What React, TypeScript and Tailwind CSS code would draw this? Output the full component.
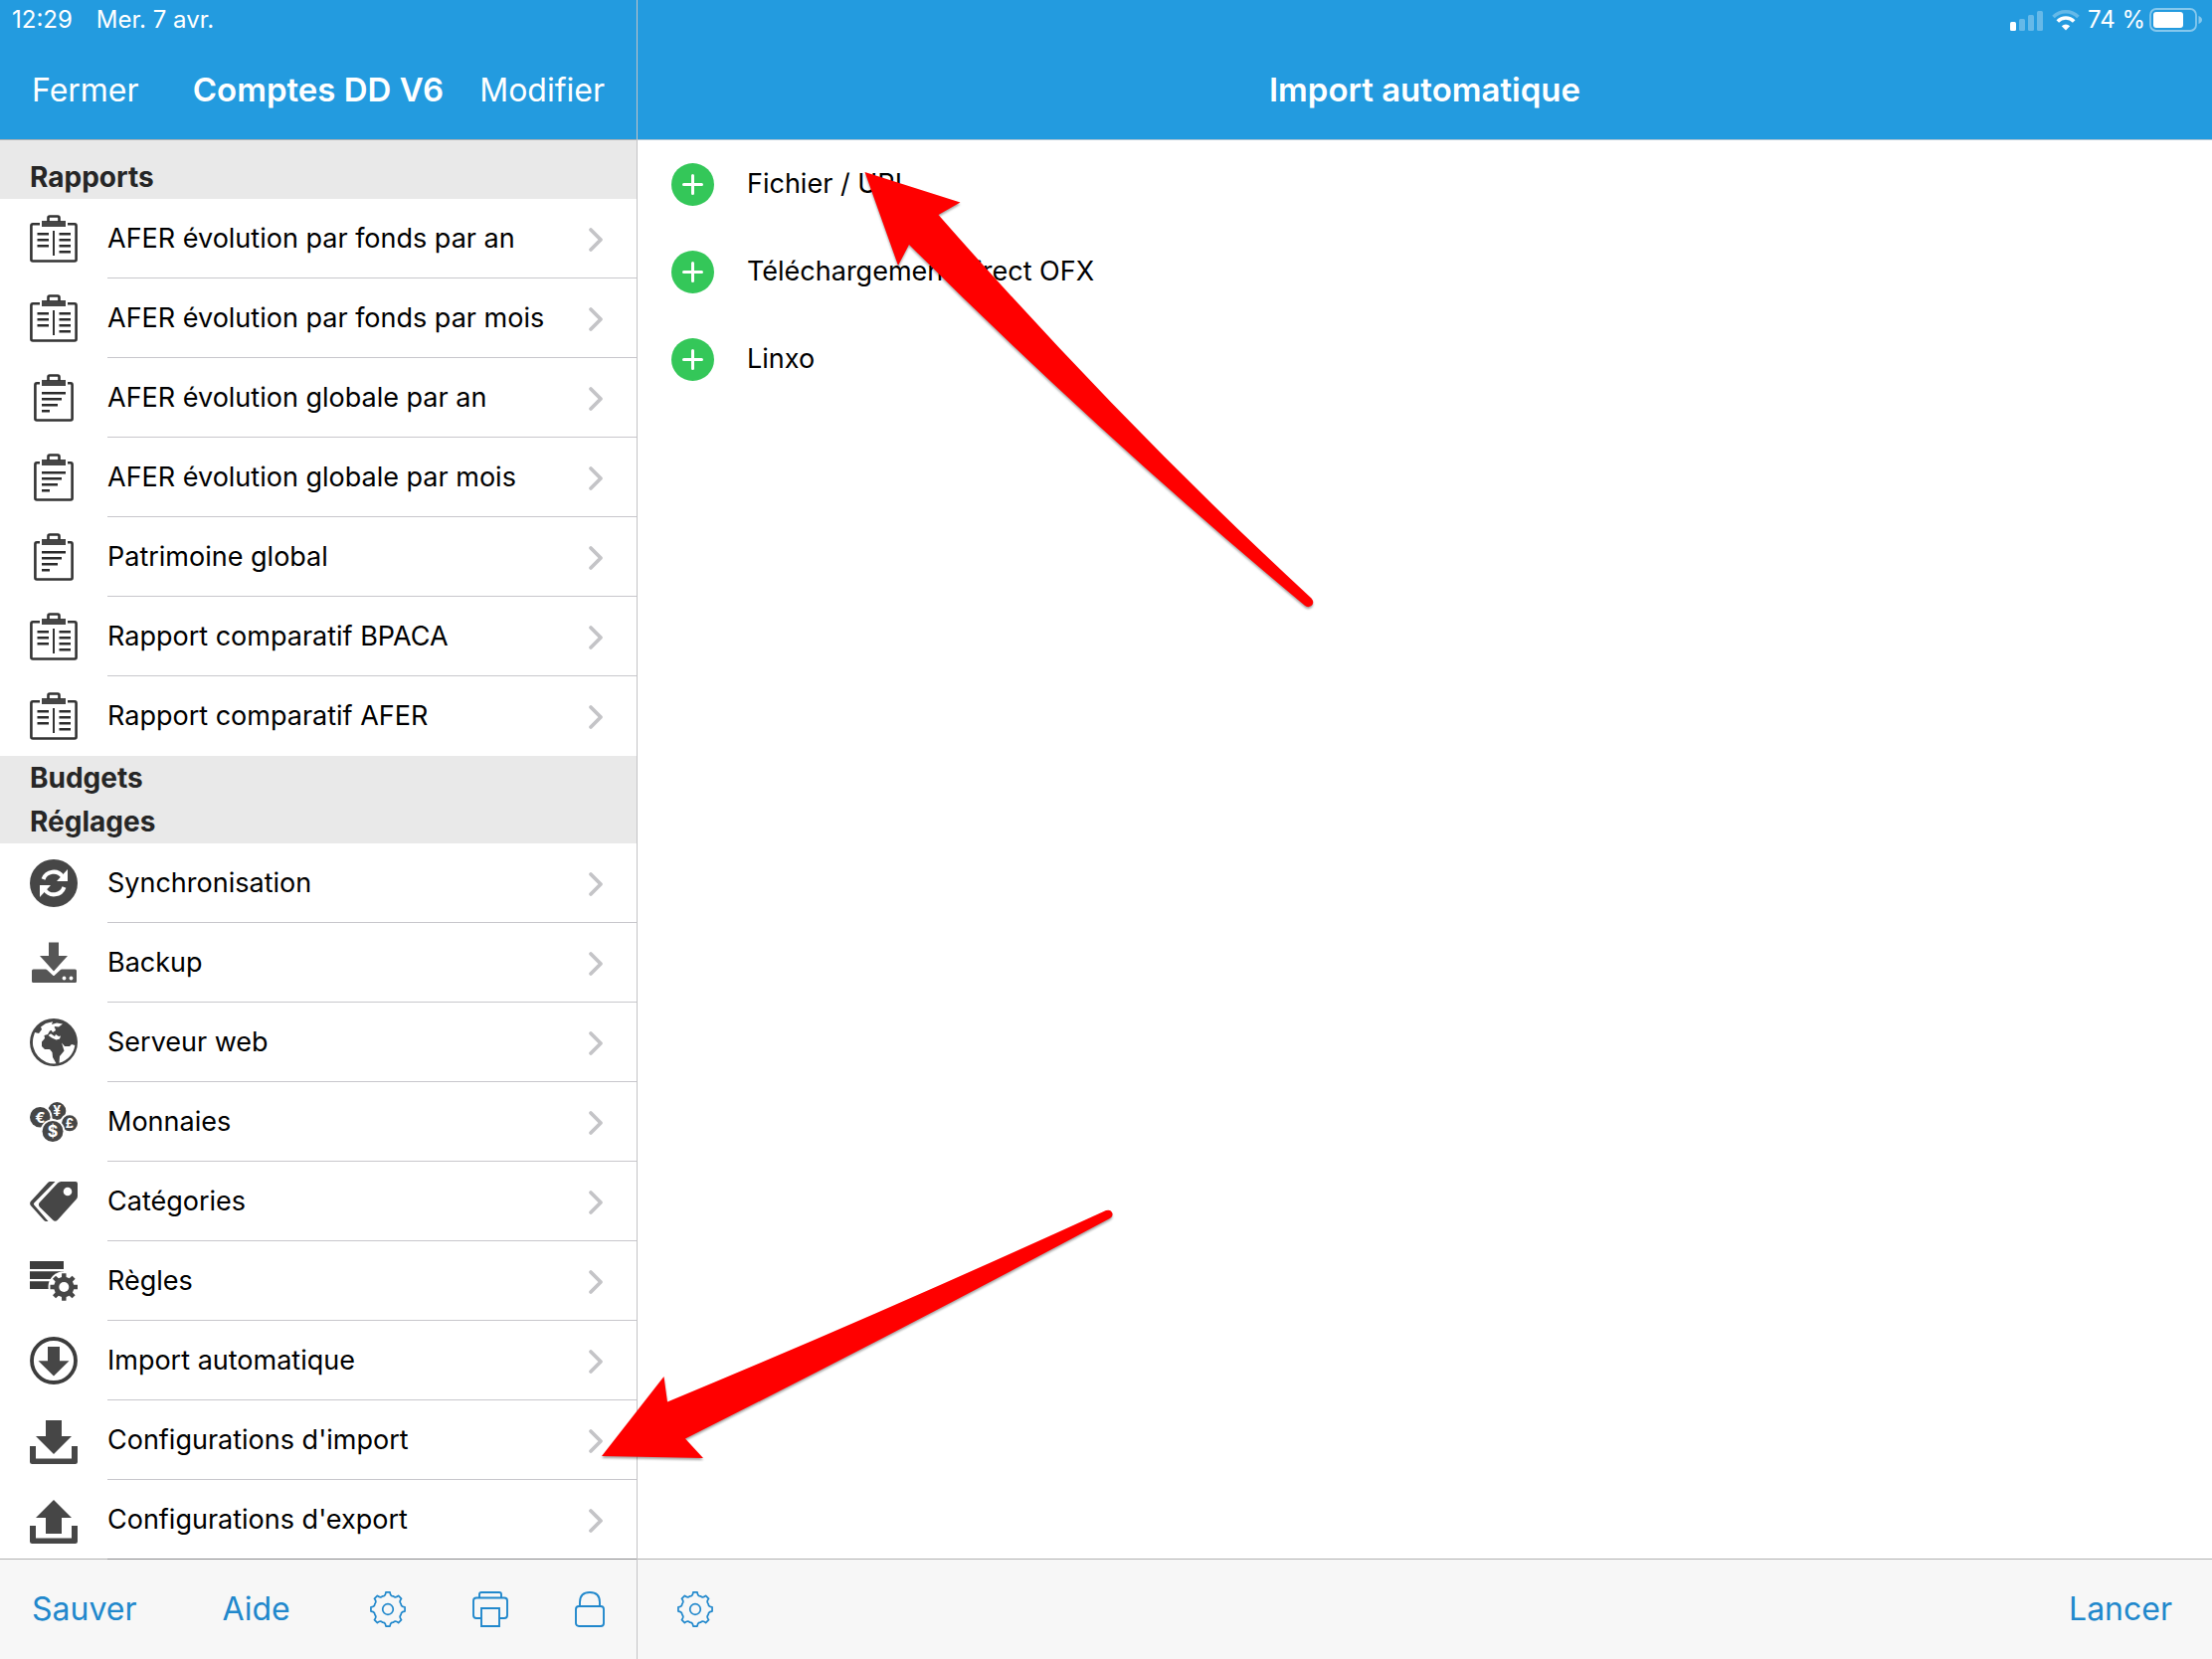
import React from 'react';

type IconProps = { className?: string };

const DARK = '#464646';

const point = (cx: number, cy: number, r: number, deg: number) => {
  const a = ((deg - 90) * Math.PI) / 180;
  return `${(cx + r * Math.cos(a)).toFixed(2)} ${(cy + r * Math.sin(a)).toFixed(2)}`;
};

// Solid gear with straight teeth
const cogPath = (cx: number, cy: number, outer: number, inner: number) => {
  let d = '';
  for (let i = 0; i < 8; i++) {
    const a = i * 45;
    d += `${i === 0 ? 'M' : 'L'}${point(cx, cy, inner, a - 13)} L${point(cx, cy, outer, a - 9)} L${point(cx, cy, outer, a + 9)} L${point(cx, cy, inner, a + 13)} `;
  }
  return d + 'Z';
};

// Outline gear with flared teeth
const wavyGearPath = (cx: number, cy: number, outer: number, inner: number) => {
  let d = `M${point(cx, cy, inner, -22.5)} `;
  for (let i = 0; i < 8; i++) {
    const a = i * 45;
    d += `Q${point(cx, cy, inner - 0.8, a - 10)} ${point(cx, cy, outer, a - 7)} L${point(cx, cy, outer, a + 7)} Q${point(cx, cy, inner - 0.8, a + 10)} ${point(cx, cy, inner, a + 22.5)} `;
  }
  return d + 'Z';
};

const ListIcon: React.FC<{ children: React.ReactNode }> = ({ children }) => (
  <svg viewBox="0 0 48 48" className="w-12 h-12 shrink-0" fill={DARK} aria-hidden="true">
    {children}
  </svg>
);

const Clip = () => (
  <>
    <rect x="12" y="6" width="24" height="6" />
    <path d="M18.5 7V3Q18.5 1.5 20 1.5H28Q29.5 1.5 29.5 3V7" fill="none" stroke="#333" strokeWidth="2.6" />
    <rect x="20" y="3" width="8" height="3" fill="#fff" />
  </>
);

const CompareReportIcon = () => (
  <ListIcon>
    <path d="M10 9.3H3Q1.4 9.3 1.4 11V45Q1.4 46.5 3 46.5H45Q46.6 46.5 46.6 45V11Q46.6 9.3 45 9.3H38" fill="none" stroke="#333" strokeWidth="2.6" />
    <Clip />
    <path d="M7.5 19.3H19M7.5 25.3H19M7.5 31.3H19M29.5 19.3H41M29.5 25.3H41M29.5 31.3H41M29.5 37.3H41" stroke="#2b2b2b" strokeWidth="2.6" />
    <path d="M24 16V41" stroke="#333" strokeWidth="2" />
  </ListIcon>
);

const ReportIcon = () => (
  <ListIcon>
    <path d="M10 9.3H7Q5.4 9.3 5.4 11V45Q5.4 46.5 7 46.5H41Q42.6 46.5 42.6 45V11Q42.6 9.3 41 9.3H38" fill="none" stroke="#333" strokeWidth="2.6" />
    <Clip />
    <path d="M12 19.3H36M12 25.3H32M12 31.3H28M12 37.3H20" stroke="#2b2b2b" strokeWidth="2.6" />
  </ListIcon>
);

const SyncIcon = () => (
  <ListIcon>
    <circle cx="24" cy="24" r="24" />
    <path d="M13.5 20A11 11 0 0 1 33 17.5" fill="none" stroke="#fff" strokeWidth="4" />
    <path d="M38 10V22H27Z" fill="#fff" />
    <path d="M34.5 28A11 11 0 0 1 15 30.5" fill="none" stroke="#fff" strokeWidth="4" />
    <path d="M10 38V26H21Z" fill="#fff" />
  </ListIcon>
);

const BackupIcon = () => (
  <ListIcon>
    <path d="M3.5 30.5H45.5Q47 30.5 47 32V42.500Q47 44 45.500 44H3.500Q2 44 2 42.500V32Q2 30.500 3.500 30.500Z" fill="#565656" />
    <path d="M17 29.500L24 36L31 29.500Z" fill="#fff" stroke="#fff" strokeWidth="2" strokeLinejoin="round" />
    <path d="M19 3.500H29V17H38L24 32.500L10 17H19Z" fill="#565656" />
    <circle cx="34.500" cy="39.500" r="1.900" fill="#fff" />
    <circle cx="41.500" cy="39.500" r="1.900" fill="#fff" />
  </ListIcon>
);

const GlobeIcon = () => (
  <ListIcon>
    <circle cx="24" cy="24" r="24" />
    <g fill="#fff">
      <path d="M3.500 19L5 14L9 15L12 11L11 8.500L16 5L23 3.300L22 6L27 4.500L33 5.500L29 8.500L25 8L24 11L20 12.500L18 16L14.500 17L15 20L12 23.500L12 28L15 31L20 31L22.500 34L23 39L26.500 45.300A21.500 21.500 0 0 1 3.500 19Z" />
      <path d="M18.500 17L21 15.300L25 18L26 16L29 18L31 17.500L30 20.500L26.500 21.500L22 19.500Z" />
      <path d="M21 11L25 9L26 12L23 14Z" />
      <path d="M32 24.500L35 28L40 28L42 26L45.300 27A21.500 21.500 0 0 1 29.500 44.800L30 38L34.500 32.500Z" />
    </g>
  </ListIcon>
);

const coins = [
  { sign: '¥', cx: 27.3, cy: 13, r: 9, size: 14 },
  { sign: '£', cx: 40, cy: 25.3, r: 8, size: 13 },
  { sign: '€', cx: 10.3, cy: 19.3, r: 10.3, size: 15 },
  { sign: '$', cx: 23, cy: 33.5, r: 10.5, size: 16 },
];

const CurrencyIcon = () => (
  <ListIcon>
    {coins.map((c) => (
      <g key={c.sign}>
        <circle cx={c.cx} cy={c.cy} r={c.r + 1.8} fill="#fff" />
        <circle cx={c.cx} cy={c.cy} r={c.r} />
        <text x={c.cx} y={c.cy + c.size * 0.36} fontSize={c.size} fontWeight="700" textAnchor="middle" fill="#fff">
          {c.sign}
        </text>
      </g>
    ))}
  </ListIcon>
);

const TagsIcon = () => (
  <ListIcon>
    <path d="M20.5 4H25.5L4.3 25.5Q3.5 26.5 4.3 27.5L18.5 44H16.5Q15 44 14 42.8L0.8 28Q-0.6 26 0.8 24L18 5.2Q19 4 20.5 4Z" />
    <path d="M31.5 4H46Q48 4 48 6V18.5Q48 20.5 46.5 22L28 42.5Q25.500 45 23 42.500L9.800 29.500Q8 27 9.800 25L28 5.500Q29.500 4 31.500 4Z" />
    <circle cx="38" cy="14" r="4.300" fill="#fff" />
  </ListIcon>
);

const RulesIcon = () => (
  <ListIcon>
    <path d="M0 4H34V12H0ZM0 14.3H34V22H0ZM0 24.3H34V32H0Z" fill="#3c3c3c" />
    <circle cx="34.3" cy="30" r="15.8" fill="#fff" />
    <path d={cogPath(34.3, 30, 14, 10.2)} />
    <circle cx="34.3" cy="30" r="5" fill="#fff" />
  </ListIcon>
);

const AutoImportIcon = () => (
  <ListIcon>
    <circle cx="24" cy="24" r="22" fill="none" stroke="#3c3c3c" strokeWidth="3.8" />
    <path d="M18 10H30V24.3H39.5L24 39.5L8.5 24.3H18Z" />
  </ListIcon>
);

const Tray = () => (
  <path d="M0 30H6V42.500H42V30H48V45.500Q48 48 45.500 48H2.500Q0 48 0 45.500Z" />
);

const ImportConfigIcon = () => (
  <ListIcon>
    <path d="M16 4H32V20H42L24 38L6 20H16Z" />
    <Tray />
  </ListIcon>
);

const ExportConfigIcon = () => (
  <ListIcon>
    <path d="M24 4L42 22H32V38H16V22H6Z" />
    <Tray />
  </ListIcon>
);

const Chevron = () => (
  <svg viewBox="0 0 16 26" className="w-4 h-[26px] shrink-0" fill="none" stroke="#c4c4c7" strokeWidth="3.8" strokeLinecap="round" strokeLinejoin="round" aria-hidden="true">
    <path d="M3 3L13 13L3 23" />
  </svg>
);

const GearIcon: React.FC<IconProps> = ({ className }) => (
  <svg viewBox="0 0 36 36" className={className} fill="none" stroke="currentColor" strokeWidth="1.7" strokeLinejoin="round" aria-hidden="true">
    <path d={wavyGearPath(18, 18, 17.2, 14.2)} />
    <circle cx="18" cy="18" r="5.3" />
  </svg>
);

const PrinterIcon: React.FC<IconProps> = ({ className }) => (
  <svg viewBox="0 0 36 36" className={className} fill="none" stroke="currentColor" strokeWidth="1.9" aria-hidden="true">
    <path d="M7 6.5V3Q7 1 9 1H27Q29 1 29 3V6.5" />
    <path d="M8.5 27H4Q1 27 1 24V9.5Q1 6.5 4 6.5H32Q35 6.5 35 9.5V24Q35 27 32 27H27.5" />
    <path d="M9 17H27V35H9Z" />
  </svg>
);

const LockIcon: React.FC<IconProps> = ({ className }) => (
  <svg viewBox="0 0 30 36" className={className} fill="none" stroke="currentColor" strokeWidth="1.9" aria-hidden="true">
    <path d="M5 15V11Q5 1 15 1Q25 1 25 11V15" />
    <rect x="1" y="15" width="28" height="20" rx="3" />
  </svg>
);

const StatusIcons = () => (
  <div className="flex items-center text-white">
    <svg viewBox="0 0 70 24" className="w-[70px] h-6" fill="#fff" aria-hidden="true">
      <rect x="0" y="14" width="6" height="9" rx="1.5" />
      <g opacity="0.3">
        <rect x="9" y="11" width="6" height="12" rx="1.5" />
        <rect x="18" y="7" width="6" height="16" rx="1.5" />
        <rect x="27" y="3" width="6" height="20" rx="1.5" />
      </g>
      <g fill="none" stroke="#fff" strokeWidth="3.6">
        <path d="M43.5 9A17.5 17.5 0 0 1 68.5 9" opacity="0.3" />
        <path d="M47.8 13.5A11.5 11.5 0 0 1 64.2 13.5" />
      </g>
      <path d="M56 22.5L51.8 18.3A6 6 0 0 1 60.2 18.3Z" />
    </svg>
    <span className="ml-2 text-2xl">74 %</span>
    <svg viewBox="0 0 54 24" className="ml-1 w-[54px] h-6" aria-hidden="true">
      <rect x="1" y="1" width="46" height="22" rx="6" fill="none" stroke="#fff" strokeWidth="1.8" opacity="0.45" />
      <path d="M49.5 8Q53 9.5 53 12Q53 14.5 49.5 16Z" fill="#fff" opacity="0.45" />
      <rect x="4" y="4" width="30" height="16" rx="3" fill="#fff" />
    </svg>
  </div>
);

const reports = [
  { label: 'AFER évolution par fonds par an', Icon: CompareReportIcon },
  { label: 'AFER évolution par fonds par mois', Icon: CompareReportIcon },
  { label: 'AFER évolution globale par an', Icon: ReportIcon },
  { label: 'AFER évolution globale par mois', Icon: ReportIcon },
  { label: 'Patrimoine global', Icon: ReportIcon },
  { label: 'Rapport comparatif BPACA', Icon: CompareReportIcon },
  { label: 'Rapport comparatif AFER', Icon: CompareReportIcon },
];

const settings = [
  { label: 'Synchronisation', Icon: SyncIcon },
  { label: 'Backup', Icon: BackupIcon },
  { label: 'Serveur web', Icon: GlobeIcon },
  { label: 'Monnaies', Icon: CurrencyIcon },
  { label: 'Catégories', Icon: TagsIcon },
  { label: 'Règles', Icon: RulesIcon },
  { label: 'Import automatique', Icon: AutoImportIcon },
  { label: "Configurations d'import", Icon: ImportConfigIcon },
  { label: "Configurations d'export", Icon: ExportConfigIcon },
];

const sources = ['Fichier / URL', 'Téléchargement direct OFX', 'Linxo'];

interface MenuListProps {
  items: { label: string; Icon: React.FC }[];
  lastLine?: boolean;
}

const MenuList: React.FC<MenuListProps> = ({ items, lastLine }) => (
  <ul>
    {items.map(({ label, Icon }, i) => (
      <li key={label}>
        <button type="button" className="w-full h-20 pl-[30px] flex items-center gap-[30px] text-left text-[27px] text-black">
          <Icon />
          <span
            className={`flex-1 h-full pt-0.5 pr-[33px] flex items-center justify-between border-b ${
              lastLine || i < items.length - 1 ? 'border-[#c8c7cc]' : 'border-transparent'
            }`}
          >
            {label}
            <Chevron />
          </span>
        </button>
      </li>
    ))}
  </ul>
);

// Red pointers laid over the screen
const Arrows = () => (
  <svg
    viewBox="600 160 730 1320"
    className="absolute left-[600px] top-[160px] w-[730px] h-[1320px] pointer-events-none drop-shadow-[0_2px_1px_rgba(0,0,0,0.35)]"
    fill="#ff0000"
    aria-hidden="true"
  >
    <path d="M869.5 173L965.5 203.5L943.5 216Q1127 425 1318.500 601.5Q1322 606 1318.500 609Q1315 611.500 1311.500 608.500Q1111 442 914 246L903 267Z" />
    <path d="M605 1464L667.5 1384L671 1409.5Q880 1323 1112 1217Q1117 1215.500 1118.500 1220Q1119 1224 1115 1225.500Q895 1343 689 1446.500L707 1466Z" />
  </svg>
);

export default function App() {
  return (
    <div className="relative min-h-screen flex bg-white font-['Inter','Liberation_Sans',sans-serif] text-black">
      <aside className="w-[641px] shrink-0 flex flex-col border-r border-[#c4c4c6]">
        <header className="bg-[#239bdf] text-white border-b border-[#b2b2b2]">
          <div className="h-10 pl-3 flex items-center gap-6 text-2xl">
            <span>12:29</span>
            <span>Mer. 7 avr.</span>
          </div>
          <div className="h-[100px] pt-0.5 px-8 grid grid-cols-[1fr_auto_1fr] items-center text-[32px]">
            <button type="button" className="justify-self-start">Fermer</button>
            <h1 className="text-[33px] font-semibold">Comptes DD V6</h1>
            <button type="button" className="justify-self-end">Modifier</button>
          </div>
        </header>

        <nav className="flex-1">
          <h2 className="h-[59px] pl-[30px] pt-[15px] bg-[#e9e9e9] text-[28px] leading-[44px] font-bold text-[#262626]">Rapports</h2>
          <MenuList items={reports} />
          <h2 className="h-11 pl-[30px] bg-[#e9e9e9] text-[28px] leading-[44px] font-bold text-[#262626]">Budgets</h2>
          <h2 className="h-11 pl-[30px] bg-[#e9e9e9] text-[28px] leading-[44px] font-bold text-[#262626]">Réglages</h2>
          <MenuList items={settings} lastLine />
        </nav>

        <footer className="h-[101px] -mt-px px-8 flex items-center bg-[#f7f7f7] bg-clip-padding border-t border-black/30 text-[32px] text-[#2188cc]">
          <button type="button">Sauver</button>
          <button type="button" className="ml-[86px]">Aide</button>
          <div className="ml-auto flex items-center gap-[67px]">
            <button type="button" aria-label="Options"><GearIcon className="w-9 h-9" /></button>
            <button type="button" aria-label="Imprimer"><PrinterIcon className="w-9 h-9" /></button>
            <button type="button" aria-label="Verrouiller"><LockIcon className="w-[30px] h-9" /></button>
          </div>
        </footer>
      </aside>

      <main className="flex-1 flex flex-col">
        <header className="bg-[#239bdf] text-white border-b border-[#b2c4d0]">
          <div className="h-10 pr-[9px] flex items-center justify-end">
            <StatusIcons />
          </div>
          <div className="h-[100px] pt-0.5 flex items-center justify-center">
            <h1 className="text-[33px] font-semibold">Import automatique</h1>
          </div>
        </header>

        <ul className="flex-1">
          {sources.map((source) => (
            <li key={source}>
              <button type="button" className="w-full h-[88px] pl-[34px] flex items-center gap-[33px] text-left text-[27px]">
                <svg viewBox="0 0 43 43" className="w-[43px] h-[43px] shrink-0" aria-hidden="true">
                  <circle cx="21.5" cy="21.5" r="21.5" fill="#34c759" />
                  <path d="M21.5 12.500V30.500M12.500 21.500H30.500" stroke="#fff" strokeWidth="3" strokeLinecap="round" />
                </svg>
                {source}
              </button>
            </li>
          ))}
        </ul>

        <footer className="h-[101px] px-10 flex items-center justify-between bg-[#f7f7f7] bg-clip-padding border-t border-black/30 text-[32px] text-[#2188cc]">
          <button type="button" aria-label="Options"><GearIcon className="w-9 h-9" /></button>
          <button type="button">Lancer</button>
        </footer>
      </main>

      <Arrows />
    </div>
  );
}
